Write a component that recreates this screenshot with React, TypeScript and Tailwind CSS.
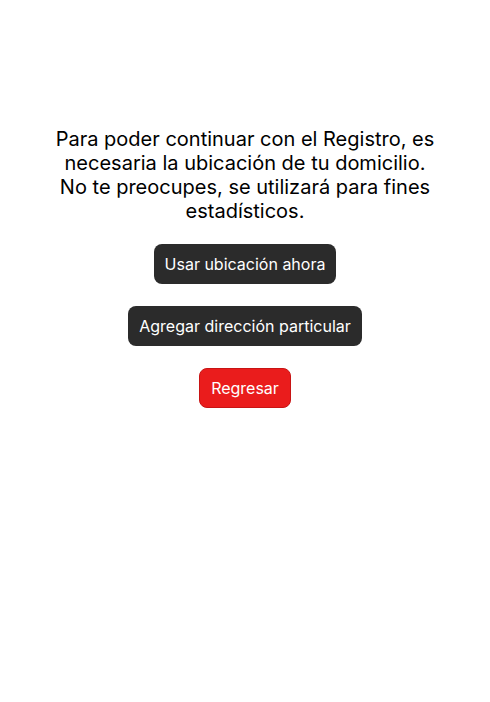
export default function App() {
  return (
    <div className="min-h-[702px] w-full bg-white font-['Inter','Liberation_Sans',sans-serif] text-black">
      <div className="flex flex-col items-center px-[50px] pt-[127px]">
        {/* Mensaje */}
        <p className="text-center text-[20px] leading-[24px]">
          Para poder continuar con el Registro, es necesaria la ubicación de tu domicilio. No te preocupes, se utilizará para fines estadísticos.
        </p>

        <div className="mt-[21px] flex flex-col items-center gap-[22px]">
          <button className="h-10 rounded-lg bg-[#2b2b2b] px-[11px] text-base text-white">
            Usar ubicación ahora
          </button>
          <button className="h-10 rounded-lg bg-[#2b2b2b] px-[11px] text-base text-white">
            Agregar dirección particular
          </button>
          <button className="h-10 rounded-lg border border-[#c81414] bg-[#ea1c1c] px-[11px] text-base text-white">
            Regresar
          </button>
        </div>
      </div>
    </div>
  );
}
